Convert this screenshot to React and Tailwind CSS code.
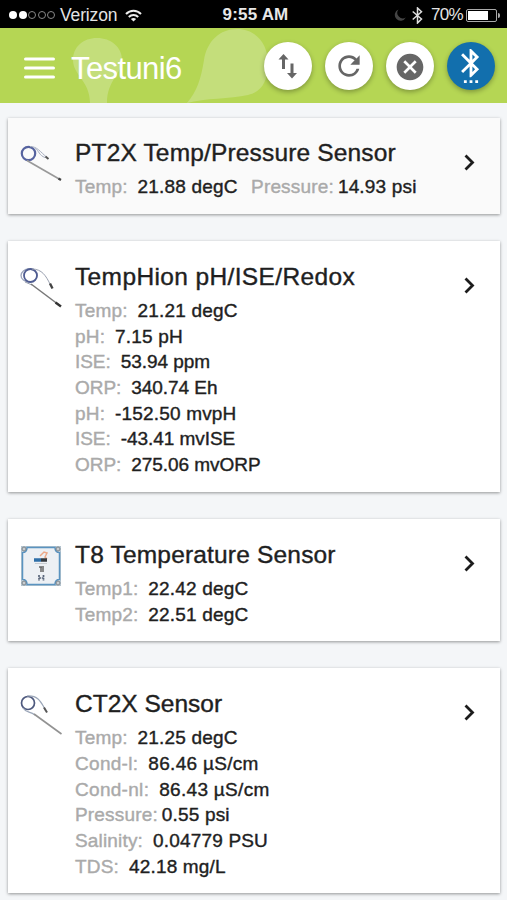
import { MdRefresh, MdCancel, MdSettingsBluetooth } from "react-icons/md"

const sensors = [
  {
    name: "PT2X Temp/Pressure Sensor",
    image: "pt2x",
    tracking: "tracking-[0.16px]",
    inline: true,
    readings: [
      { label: "Temp:", value: "21.88 degC" },
      { label: "Pressure:", value: "14.93 psi", tight: true },
    ],
  },
  {
    name: "TempHion pH/ISE/Redox",
    image: "temphion",
    tracking: "tracking-[0.37px]",
    readings: [
      { label: "Temp:", value: "21.21 degC" },
      { label: "pH:", value: "7.15 pH" },
      { label: "ISE:", value: "53.94 ppm", dense: true },
      { label: "ORP:", value: "340.74 Eh", dense: true },
      { label: "pH:", value: "-152.50 mvpH" },
      { label: "ISE:", value: "-43.41 mvISE", dense: true },
      { label: "ORP:", value: "275.06 mvORP", dense: true },
    ],
  },
  {
    name: "T8 Temperature Sensor",
    image: "t8",
    tracking: "tracking-[0.18px]",
    readings: [
      { label: "Temp1:", value: "22.42 degC" },
      { label: "Temp2:", value: "22.51 degC" },
    ],
  },
  {
    name: "CT2X Sensor",
    image: "ct2x",
    tracking: "tracking-normal",
    readings: [
      { label: "Temp:", value: "21.25 degC" },
      { label: "Cond-l:", value: "86.46 µS/cm", wide: true },
      { label: "Cond-nl:", value: "86.43 µS/cm", wide: true },
      { label: "Pressure:", value: "0.55 psi", tight: true },
      { label: "Salinity:", value: "0.04779 PSU" },
      { label: "TDS:", value: "42.18 mg/L" },
    ],
  },
]

export default function App() {
  return (
    <div className="h-[900px] w-[507px] overflow-hidden bg-[#f4f6f8] font-['Liberation_Sans',Arial,sans-serif] text-[#1f1f1f]">
      <StatusBar />
      <Header />
      <main className="flex flex-col gap-[27px] pt-[15px] pr-[7px] pl-[7.5px]">
        {sensors.map((sensor) => (
          <SensorCard key={sensor.image} sensor={sensor} />
        ))}
      </main>
    </div>
  )
}

function StatusBar() {
  return (
    <div className="grid h-7 grid-cols-[1fr_auto_1fr] items-center bg-black pt-px pr-[7px] pl-[9px] text-[17.5px] leading-7 text-[#e4e4e4]">
      <div className="flex items-center">
        <div className="flex gap-[1.5px]">
          <span className="size-[8px] rounded-full bg-white" />
          <span className="size-[8px] rounded-full bg-white" />
          <span className="size-[8px] rounded-full border border-[#888]" />
          <span className="size-[8px] rounded-full border border-[#888]" />
          <span className="size-[8px] rounded-full border border-[#888]" />
        </div>
        <span className="ml-[5px] w-[65px] tracking-[-0.15px] whitespace-nowrap">Verizon</span>
        <svg className="h-[13px] w-[17px]" viewBox="0 0 17 13" fill="none" stroke="#eee" strokeWidth="2">
          <path d="M1 5c4.2-4.3 10.800-4.300 15 0" />
          <path d="M3.800 8c2.700-2.700 6.700-2.700 9.400 0" />
          <path d="M8.500 12.500 5.900 9.900c1.500-1.300 3.700-1.300 5.200 0z" fill="#eee" stroke="none" />
        </svg>
      </div>
      <span className="pl-[2px] text-[17px] font-bold tracking-[0.2px] text-[#e8e8e8]">9:55 AM</span>
      <div className="flex items-center justify-end">
        <svg className="-mr-px h-3 w-3" viewBox="0 0 12 12" fill="#444">
          <path d="M4.500.5A5.800 5.800 0 1 0 11.800 8.500 5.500 5.500 0 0 1 4.500.5z" />
        </svg>
        <svg className="ml-[7px] h-[17px] w-[11px]" viewBox="0 0 11 17" fill="none" stroke="#ddd" strokeWidth="1.500">
          <path d="M.7 4.500 9.500 12l-4 4V1l4 3.800-8.800 7.700" />
        </svg>
        <span className="ml-[8px] w-[35px] text-[17px] tracking-[-0.7px]">70%</span>
        <span className="flex h-[13px] w-[31px] rounded-[2px] border border-[#aaa] p-px">
          <span className="w-[20px] bg-white" />
        </span>
        <span className="ml-px h-[5px] w-[2px] rounded-r-full bg-[#aaa]" />
      </div>
    </div>
  )
}

function Header() {
  return (
    <header className="relative flex h-[75px] items-center bg-[#b5d654] pr-3 pl-6">
      <svg className="absolute inset-0 h-[75px] w-[507px]" viewBox="0 0 507 75" fill="#c4de7b">
        <path d="M97 10c14 0 25 9 25 22 0 14-15 20-15 43H90C90 53 73 47 73 32c0-13 10-22 24-22z" />
        <path d="M187 75c10-12 14-24 17-43 3-19 16-31 33-31 19 0 31 15 31 34 0 19-7 29-20 32-18 4-43 3-61 8z" />
      </svg>
      <svg className="relative mt-[5px] h-[22px] w-[31px]" viewBox="0 0 31 22" stroke="white" strokeWidth="3" strokeLinecap="round">
        <path d="M1.500 2h28M1.500 11h28M1.500 20h28" />
      </svg>
      <h1 className="relative mt-[5px] ml-4 grow text-[31px] leading-none tracking-[-0.6px] text-white">Testuni6</h1>
      <div className="relative flex gap-[13px]">
        <RoundButton>
          <svg className="mt-[3px] size-[28px]" viewBox="0 0 28 28" fill="#666">
            <path d="M9.500 1 4.500 6.500h3.500v9.500h3V6.500h3.500zM16.500 10.500V20H13l5 5.500 5-5.500h-3.500v-9.500z" />
          </svg>
        </RoundButton>
        <RoundButton>
          <MdRefresh className="mt-px size-[32px] text-[#666]" />
        </RoundButton>
        <RoundButton>
          <MdCancel className="mt-[2px] size-[32px] text-[#666]" />
        </RoundButton>
        <RoundButton blue>
          <MdSettingsBluetooth className="size-[34px] text-white" />
        </RoundButton>
      </div>
    </header>
  )
}

function RoundButton({ blue, children }) {
  return (
    <button
      className={`flex size-12 items-center justify-center rounded-full shadow-[0_2px_5px_rgba(0,0,0,0.3)] ${
        blue ? "bg-[#126fad]" : "bg-white"
      }`}
    >
      {children}
    </button>
  )
}

function SensorCard({ sensor }) {
  return (
    <section
      className={`flex pb-[14px] pl-3 shadow-[0_1px_3px_rgba(0,0,0,0.4)] ${
        sensor.inline ? "bg-[#fafafa] pt-[19px]" : "bg-white pt-[20px]"
      }`}
    >
      <SensorImage type={sensor.image} />
      <div className="ml-[13.5px] grow [-webkit-text-stroke:0.4px_currentColor]">
        <h2 className={`mb-[5px] text-[24.5px] leading-8 whitespace-nowrap ${sensor.tracking}`}>{sensor.name}</h2>
        <div className={sensor.inline ? "flex gap-[13.5px]" : "flex flex-col"}>
          {sensor.readings.map((reading, i) => (
            <Reading key={i} {...reading} />
          ))}
        </div>
      </div>
      <svg className="mt-[16.500px] mr-[25px] h-[17px] w-[11px]" viewBox="0 0 11 17" fill="none" stroke="#1c1c1c" strokeWidth="2.800">
        <path d="m1.500 1.500 7 7-7 7" />
      </svg>
    </section>
  )
}

function Reading({ label, value, tight, dense, wide }) {
  let tracking = "tracking-[0.17px]"
  if (dense) tracking = "tracking-[-0.05px]"
  if (wide) tracking = "tracking-[0.3px]"

  return (
    <p className={`flex h-[25.700px] items-center text-[19px] leading-none whitespace-nowrap ${tracking}`}>
      <span className="text-[#aaa]">{label}</span>
      <span className={tight ? "ml-[4px]" : "ml-[10px]"}>{value}</span>
    </p>
  )
}

function SensorImage({ type }) {
  if (type === "t8") {
    return (
      <svg className="mt-[6px] size-[42px]" viewBox="0 0 42 42">
        <rect x="1.500" y="1.500" width="39" height="39" fill="#dfe3e6" stroke="#b5c4cf" />
        <path d="M7 2.500h28q0 5 4.500 5v27q-4.500 0-4.500 5H7q0-5-4.500-5v-27q4.500 0 4.500-5z" fill="#edf0f4" stroke="#5a93c0" strokeWidth="1.500" />
        <g fill="#c9cdd0" stroke="#7b8389">
          <circle cx="4" cy="4" r="2" />
          <circle cx="38" cy="4" r="2" />
          <circle cx="4" cy="38" r="2" />
          <circle cx="38" cy="38" r="2" />
        </g>
        <path d="m20 11 4-4 3 1-2 4 2 2" fill="none" stroke="#eda989" strokeWidth="1.500" />
        <path d="M14 15h7" stroke="#2f6fa8" strokeWidth="3.500" />
        <path d="M21 15h6" stroke="#33383e" strokeWidth="3.500" />
        <path d="M15 18.500h12" stroke="#c9cdd2" />
        <path d="M19 22h5M21 22v5M23 23v4" stroke="#666" strokeWidth="1.500" />
        <path d="M19 30v6M23.500 30v6M19 33h4.500" stroke="#59657a" strokeWidth="1.700" strokeDasharray="2 .8" />
      </svg>
    )
  }

  // coiled cable with a connector end and a probe end
  return (
    <svg className="mt-[6px] size-[42px]" viewBox="0 0 42 42" fill="none">
      {type === "pt2x" && (
        <>
          <circle cx="8.500" cy="10.500" r="6.700" stroke="#56639f" strokeWidth="2.200" />
          <path d="M10 3.500c7 0 10 5 17 11M15 5.500c4 2 4 7 10 9" stroke="#a5adc0" />
          <path d="m25.500 13.500 3 2.500" stroke="#555" strokeWidth="2" />
          <path d="m7 17.500 33 19" stroke="#999" strokeWidth="1.700" />
          <path d="m38.500 35.500 2.500 1.500" stroke="#444" strokeWidth="2.200" />
        </>
      )}
      {type === "temphion" && (
        <>
          <ellipse cx="9" cy="8.500" rx="8" ry="6.500" stroke="#9ba4ba" strokeWidth="1.300" />
          <circle cx="10.500" cy="8.500" r="6.500" stroke="#4f5c91" strokeWidth="1.800" />
          <path d="M12 2c10 0 14 7 18 15M5 15l7 3" stroke="#9aa1b0" />
          <path d="m30 16.500 2.500 5" stroke="#444" strokeWidth="2.400" />
          <path d="m11 17 28 21" stroke="#777" strokeWidth="1.500" />
          <path d="m35.500 35.500 5.500 4" stroke="#333" strokeWidth="2.400" />
        </>
      )}
      {type === "ct2x" && (
        <>
          <circle cx="8" cy="9" r="6.500" stroke="#4e597e" strokeWidth="1.700" />
          <path d="M7 2c11-1 14 6 18 13M3 14c3 5 7 3 12 7" stroke="#9ba6b8" strokeWidth="1.200" />
          <path d="m24 13.500 3 5" stroke="#555" strokeWidth="2" />
          <path d="m14 20 27.500 20" stroke="#929292" strokeWidth="1.600" />
        </>
      )}
    </svg>
  )
}
